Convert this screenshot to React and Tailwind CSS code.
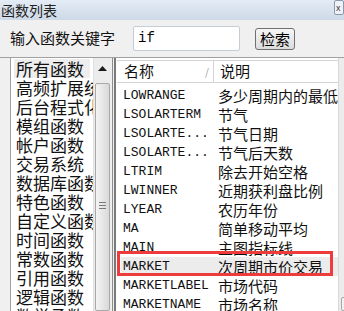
const cats = [
  "所有函数",
  "高频扩展统计",
  "后台程式化",
  "模组函数",
  "帐户函数",
  "交易系统",
  "数据库函数",
  "特色函数",
  "自定义函数",
  "时间函数",
  "常数函数",
  "引用函数",
  "逻辑函数",
  "数学函数",
];

const funcs = [
  ["LOWRANGE", "多少周期内的最低"],
  ["LSOLARTERM", "节气"],
  ["LSOLARTE...", "节气日期"],
  ["LSOLARTE...", "节气后天数"],
  ["LTRIM", "除去开始空格"],
  ["LWINNER", "近期获利盘比例"],
  ["LYEAR", "农历年份"],
  ["MA", "简单移动平均"],
  ["MAIN", "主图指标线"],
  ["MARKET", "次周期市价交易"],
  ["MARKETLABEL", "市场代码"],
  ["MARKETNAME", "市场名称"],
];

const cjk = { fontFamily: "'Noto Sans CJK SC', sans-serif" };
const mono = { fontFamily: "'Liberation Mono', 'Noto Sans CJK SC', monospace" };

function UpArrow() {
  return (
    <svg width="9" height="5" viewBox="0 0 9 5">
      <path d="M0 5 L4.5 0 L9 5 Z" fill="#1a1a1a" />
    </svg>
  );
}

function Grip() {
  return (
    <div className="flex flex-col gap-[2px]">
      <div className="w-[7px] h-[1px] bg-[#7a7a7a]" />
      <div className="w-[7px] h-[1px] bg-[#7a7a7a]" />
      <div className="w-[7px] h-[1px] bg-[#7a7a7a]" />
    </div>
  );
}

export default function App() {
  return (
    <div className="relative w-[344px] h-[311px] overflow-hidden bg-[#f0f0f0]" style={cjk}>
      {/* title bar */}
      <div className="flex items-center justify-between h-[20px] bg-gradient-to-b from-[#e4ecf5] to-[#cdd9e7]">
        <span className="text-[14px] leading-none text-[#222] pl-[1px]">函数列表</span>
        <div className="w-[10px] h-[15px] self-start border border-[#8a99ab] rounded-[2px] bg-[#eef2f7] text-[9px] leading-[13px] text-[#444] pl-[1px]">x</div>
      </div>

      {/* search row */}
      <div className="flex items-center h-[37px] pl-[10px]">
        <span className="text-[15px] text-[#111] w-[123px]">输入函数关键字</span>
        <div className="w-[107px] h-[25px] bg-white border border-[#c4ccd6] rounded-[2px] flex items-center pl-[4px]">
          <span className="text-[14px] text-black" style={mono}>if</span>
        </div>
        <button className="ml-[15px] w-[40px] h-[22px] rounded-[3px] border border-[#707070] bg-gradient-to-b from-[#f6f6f6] to-[#dcdcdc] text-[15px] leading-none text-black">
          检索
        </button>
      </div>

      {/* panels */}
      <div className="flex h-[254px] border-t border-[#a0a0a0]">
        {/* left list */}
        <div className="ml-[10px] w-[102px] flex border-l border-[#a0a0a0] bg-white">
          <div className="w-[82px] overflow-hidden pt-[1px] pl-[3px]">
            {cats.map((c, i) => (
              <div
                key={c}
                className={`h-[19px] overflow-hidden pl-[2px] text-[17px] leading-[19px] text-[#111] whitespace-nowrap ${i === 0 ? "bg-[#eeeeee] w-[76px]" : ""}`}
              >
                {c}
              </div>
            ))}
          </div>
          <div className="w-[18px] flex flex-col bg-[#ececec] border-l border-[#e0e0e0]">
            <div className="h-[20px] flex items-center justify-center">
              <UpArrow />
            </div>
            <div className="mx-[1px] mt-[5px] flex-1 rounded-[2px] border border-[#a8a8a8] bg-gradient-to-r from-[#f4f4f4] to-[#d9d9d9] flex items-center justify-center pt-[16px]">
              <Grip />
            </div>
          </div>
        </div>

        <div className="w-[2px] border-l border-[#8c8c8c] ml-[1px]" />

        {/* right table */}
        <div className="flex-1 flex border-l-2 border-[#7a7a7a] ml-[1px]">
          <div className="flex-1 bg-white pl-[1px] pt-[2px] overflow-hidden">
            <div className="flex h-[23px] border-y border-[#d5d5d5] text-[15px] text-[#111]">
              <div className="w-[97px] flex items-center justify-between pl-[7px] pr-[4px] border-r border-[#d5d5d5]">
                <span>名称</span>
                <span className="text-[10px] text-[#999]">/</span>
              </div>
              <div className="pl-[6px] flex items-center">说明</div>
            </div>
            <div className="pt-[3px]">
              {funcs.map(([n, d], i) => (
                <div
                  key={i}
                  className={`flex h-[19px] items-center ml-[4px] ${i === 9 ? "bg-[#ececec]" : ""}`}
                >
                  <span className="w-[97px] pl-[2px] text-[13px] text-[#111] whitespace-nowrap" style={mono}>{n}</span>
                  <span className="text-[15px] leading-none text-[#111] whitespace-nowrap">{d}</span>
                </div>
              ))}
            </div>
          </div>
          <div className="w-[19px] flex flex-col bg-[#ececec] border-l border-[#d8d8d8]">
            <div className="h-[22px] flex items-center justify-center pt-[4px]">
              <UpArrow />
            </div>
            <div className="flex-1" />
            <div className="h-[14px] mx-[2px] rounded-[2px] border border-[#a8a8a8] bg-gradient-to-r from-[#f4f4f4] to-[#d9d9d9] flex items-start justify-center pt-[3px]">
              <Grip />
            </div>
          </div>
        </div>
      </div>

      {/* red annotation box */}
      <div className="absolute left-[117px] top-[251px] w-[216px] h-[25px] border-[3px] border-[#ee3b3b]" />
    </div>
  );
}
